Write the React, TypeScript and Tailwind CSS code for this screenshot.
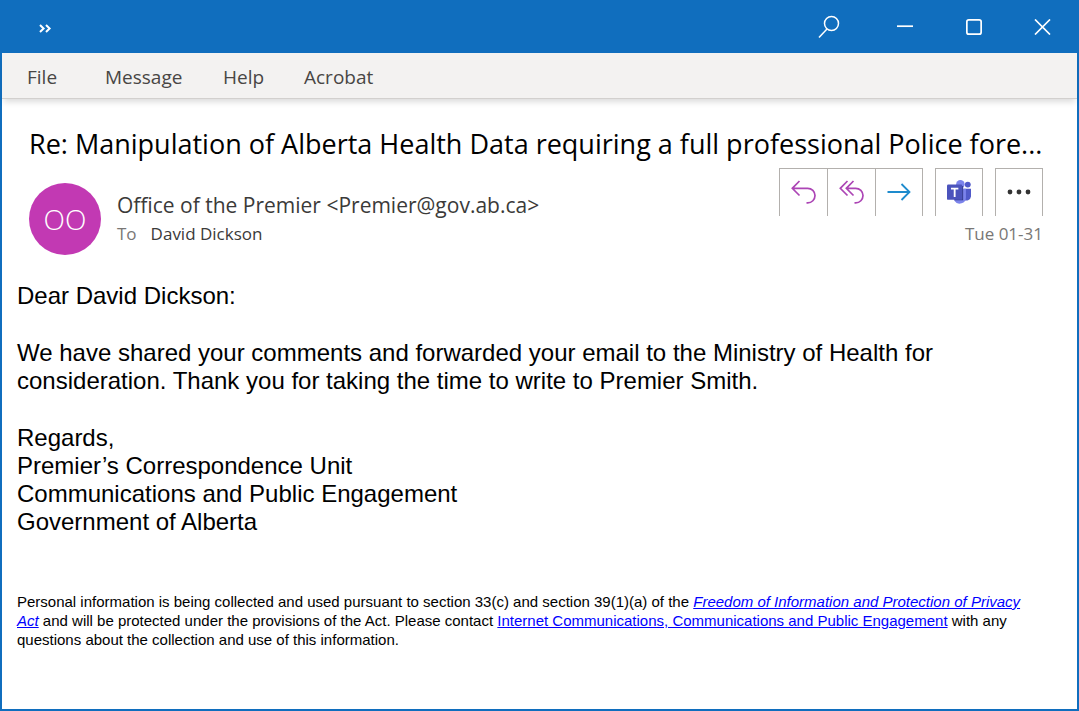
import type { ReactNode } from "react";

const menuItems = [
  { label: "File", className: "w-[78px]" },
  { label: "Message", className: "w-[118px]" },
  { label: "Help", className: "w-[81px]" },
  { label: "Acrobat", className: "" },
];

const TitleBar = () => {
  return (
    <header className="flex h-[53px] items-center justify-between bg-[#106ebe] pl-[39px] pr-7 text-white">
      <button aria-label="More commands" className="pt-1">
        <svg width="13" height="9" viewBox="0 0 13 9" fill="none" stroke="currentColor" strokeWidth="2">
          <path d="M1 1l3.6 3.5L1 8M7 1l3.6 3.5L7 8" />
        </svg>
      </button>
      <div className="flex items-center">
        <button aria-label="Search" className="mr-[57px]">
          <svg width="22" height="24" viewBox="0 0 22 24" fill="none" stroke="currentColor" strokeWidth="1.5">
            <circle cx="13.5" cy="8.5" r="7" />
            <path d="M9 14L1 22.5" />
          </svg>
        </button>
        <button aria-label="Minimize" className="mr-[53px]">
          <svg width="16" height="16" viewBox="0 0 16 16" fill="none" stroke="currentColor" strokeWidth="1.7">
            <path d="M0 7.2h16" />
          </svg>
        </button>
        <button aria-label="Maximize" className="mr-[52px]">
          <svg width="16" height="16" viewBox="0 0 16 16" fill="none" stroke="currentColor" strokeWidth="1.7">
            <rect x="0.85" y="0.85" width="14.3" height="14.3" rx="2" />
          </svg>
        </button>
        <button aria-label="Close">
          <svg width="17" height="16" viewBox="0 0 17 16" fill="none" stroke="currentColor" strokeWidth="1.7">
            <path d="M1 0.5l15 15M16 0.5l-15 15" />
          </svg>
        </button>
      </div>
    </header>
  );
};

const ButtonGroup = ({ children }: { children: ReactNode }) => {
  return (
    <div className="flex h-12 divide-x divide-[#b3b0ad] border border-b-0 border-[#b3b0ad]">
      {children}
    </div>
  );
};

const ActionButton = ({ label, children }: { label: string; children: ReactNode }) => {
  return (
    <button
      aria-label={label}
      className="flex min-w-[46px] grow items-center justify-center px-[11px] pb-[2px]"
    >
      {children}
    </button>
  );
};

const TeamsIcon = () => {
  return (
    <svg width="24" height="24" viewBox="0 0 26 26">
      <circle cx="22.5" cy="5" r="3.2" fill="#5059c9" />
      <path d="M18 9.5h8v8.5a4.8 4.8 0 0 1-8 3z" fill="#5059c9" />
      <circle cx="14.5" cy="4.7" r="4.6" fill="#7b83eb" />
      <path d="M8 9.5h12.5v9a6.8 6.8 0 0 1-12.5 4z" fill="#7b83eb" />
      <path d="M8 6.5h9.5v15.5h-9.5z" fill="#363c8e" />
      <rect x="0" y="5" width="16.5" height="16.5" rx="1.3" fill="#4b53bc" />
      <path d="M4.3 9.3h8M8.3 9.3v9" stroke="#fff" strokeWidth="2" />
    </svg>
  );
};

const Actions = () => {
  return (
    <div className="flex gap-3">
      <ButtonGroup>
        <ActionButton label="Reply">
          <svg width="25" height="24" viewBox="0 0 25 24" fill="none" stroke="#ac45b5" strokeWidth="1.7">
            <path d="M8.5 1L1.3 8.3l7.2 7.2M1.3 8.3h15.4a7.3 7.3 0 0 1 0 14.6h-1.2" />
          </svg>
        </ActionButton>
        <ActionButton label="Reply all">
          <svg width="25" height="24" viewBox="0 0 25 24" fill="none" stroke="#ac45b5" strokeWidth="1.7">
            <path d="M8.5 1L1.3 8.3l7.2 7.2M14.5 1L7.3 8.3l7.2 7.2M7.3 8.3h9.4a7.3 7.3 0 0 1 0 14.6h-1.2" />
          </svg>
        </ActionButton>
        <ActionButton label="Forward">
          <svg width="24" height="18" viewBox="0 0 24 18" fill="none" stroke="#1e8bcd" strokeWidth="1.8">
            <path d="M0.5 9h22M14.5 1l8 8-8 8" />
          </svg>
        </ActionButton>
      </ButtonGroup>
      <ButtonGroup>
        <ActionButton label="Share to Teams">
          <TeamsIcon />
        </ActionButton>
      </ButtonGroup>
      <ButtonGroup>
        <ActionButton label="More actions">
          <svg width="24" height="6" viewBox="0 0 24 6" fill="#333">
            <circle cx="3" cy="3" r="2.4" />
            <circle cx="12" cy="3" r="2.4" />
            <circle cx="21" cy="3" r="2.4" />
          </svg>
        </ActionButton>
      </ButtonGroup>
    </div>
  );
};

export default function App() {
  return (
    <div className="flex min-h-screen flex-col bg-[#106ebe] font-['Open_Sans',sans-serif]">
      <TitleBar />
      <div className="mx-[2px] mb-[2px] grow bg-white">
        {/* Ribbon tabs */}
        <nav className="flex h-[46px] items-center border-b border-[#d2d0ce] bg-[#f3f2f1] pl-[25px] pt-[3px] text-[19px] text-[#484644] shadow-[0_5px_6px_-2px_rgba(0,0,0,0.14)]">
          {menuItems.map((item) => (
            <div key={item.label} className={item.className}>
              <button>{item.label}</button>
            </div>
          ))}
        </nav>

        {/* Message header */}
        <section className="pl-[27px] pr-[34px] pt-[25px]">
          <h1 className="whitespace-nowrap text-[27px] leading-10 text-black">
            Re: Manipulation of Alberta Health Data requiring a full professional Police fore...
          </h1>
          <div className="mt-1 flex justify-between">
            <div className="flex gap-4 pt-[15px]">
              <div className="flex size-[72px] items-center justify-center rounded-full bg-[#c239b3] text-[28px] font-light text-white">
                OO
              </div>
              <div className="pt-2">
                <p className="text-[21px] leading-7 text-[#3b3a39]">
                  Office of the Premier &lt;Premier@gov.ab.ca&gt;
                </p>
                <p className="flex gap-[14px] pt-[3px] text-[17px] leading-6 text-[#3b3a39]">
                  <span className="text-[#797775]">To</span>
                  <span>David Dickson</span>
                </p>
              </div>
            </div>
            <div className="flex flex-col items-end">
              <Actions />
              <time className="mt-[6px] text-[17px] leading-6 text-[#797775]">Tue 01-31</time>
            </div>
          </div>
        </section>

        {/* Message body */}
        <main className="px-[15px] pt-[27px] font-['Liberation_Sans',Arial,sans-serif] text-[24px] leading-7 text-black">
          <p>Dear David Dickson:</p>
          <p className="mt-[29px]">
            We have shared your comments and forwarded your email to the Ministry of Health for
            <br />
            consideration. Thank you for taking the time to write to Premier Smith.
          </p>
          <p className="mt-[29px]">
            Regards,
            <br />
            Premier’s Correspondence Unit
            <br />
            Communications and Public Engagement
            <br />
            Government of Alberta
          </p>
          <p className="mt-14 text-[15px] leading-[19px]">
            Personal information is being collected and used pursuant to section 33(c) and section 39(1)(a) of the{" "}
            <a href="#foip" className="italic text-[#0000ff] underline">
              Freedom of Information and Protection of Privacy
              <br />
              Act
            </a>{" "}
            and will be protected under the provisions of the Act. Please contact{" "}
            <a href="#contact" className="text-[#0000ff] underline">
              Internet Communications, Communications and Public Engagement
            </a>{" "}
            with any
            <br />
            questions about the collection and use of this information.
          </p>
        </main>
      </div>
    </div>
  );
}
